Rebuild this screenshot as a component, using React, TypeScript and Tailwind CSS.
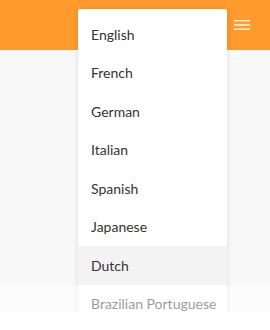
import React from "react";

const items = ["English", "French", "German", "Italian", "Spanish", "Japanese", "Dutch", "Brazilian Portuguese"];

export default function App() {
  return (
    <div className="relative w-[270px] h-[330px] overflow-hidden bg-[#f9f9f9]" style={{ fontFamily: "Lato, 'Noto Sans', sans-serif" }}>
      <div className="h-[50px] bg-[#ff9a2c] flex items-center justify-end pr-[20px]">
        <svg width="16" height="12" viewBox="0 0 16 12" className="text-white">
          <rect x="0" y="1" width="16" height="1.3" fill="currentColor" />
          <rect x="0" y="5.3" width="16" height="1.3" fill="currentColor" />
          <rect x="0" y="9.6" width="16" height="1.3" fill="currentColor" />
        </svg>
      </div>
      <div className="absolute left-[78px] top-[9px] w-[149px] bg-white rounded-[2px] shadow-[0_1px_6px_rgba(0,0,0,0.12)] pt-[6px] pb-[6px]">
        {items.map((it) => (
          <div
            key={it}
            className={`h-[38.5px] flex items-center pl-[13px] text-[14px] text-[#333333] whitespace-nowrap ${it === "Dutch" ? "bg-[#f3f3f3]" : ""}`}
          >
            {it}
          </div>
        ))}
      </div>
      <div className="absolute left-0 right-0 top-[286px] h-[26px] bg-white/50" />
      <div className="absolute left-0 right-0 top-[312px] bottom-0 bg-white" />
    </div>
  );
}
